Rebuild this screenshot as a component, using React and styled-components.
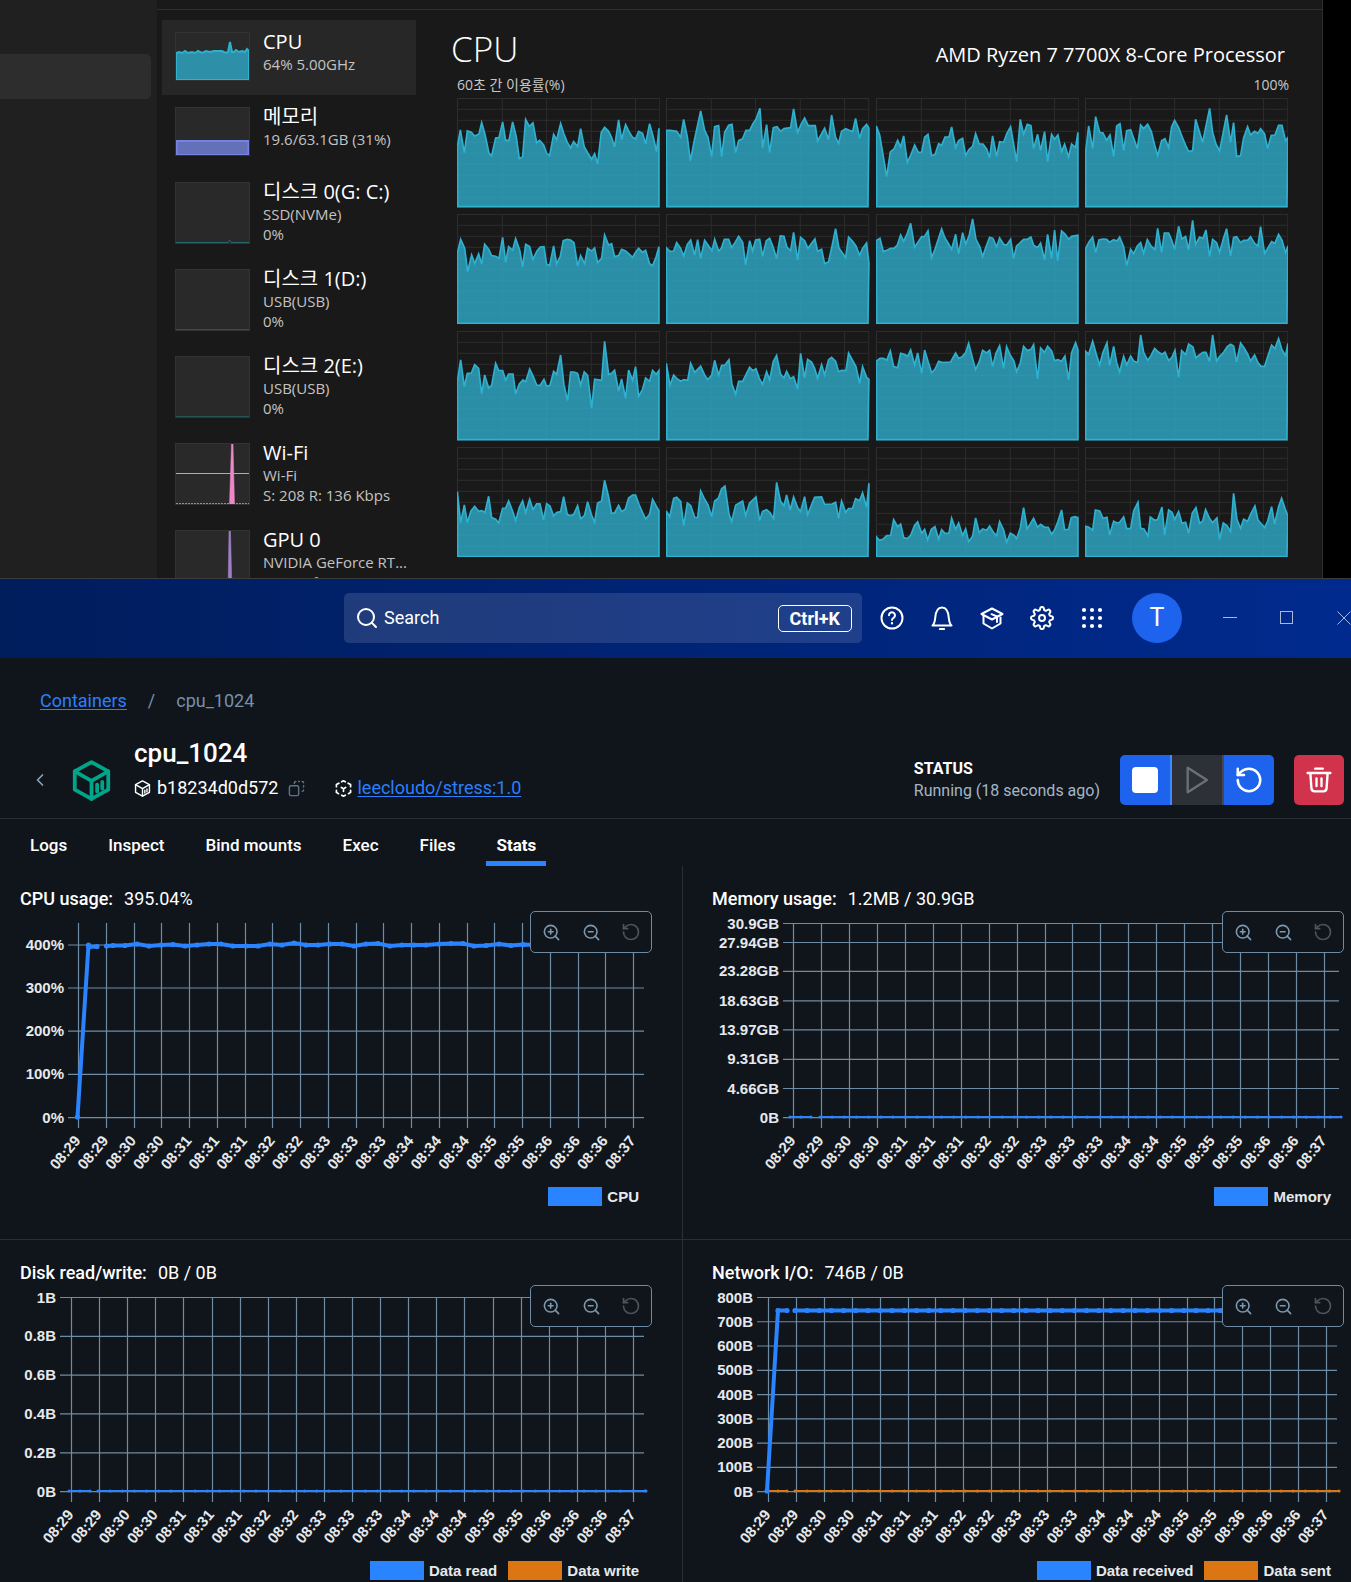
import React from "react";
import styled, { createGlobalStyle } from "styled-components";
import { Search, ZoomIn, ZoomOut, RotateCcw, Settings, ChevronLeft } from "lucide-react";

const GlobalStyle = createGlobalStyle`
  *, *::before, *::after { box-sizing: border-box; }
  body { margin: 0; background: #000; }
  button, input { font: inherit; color: inherit; }
  button { border: 0; padding: 0; background: none; cursor: pointer; }
`;

const Desktop = styled.div`
  height: 100vh;
  overflow: hidden;
  background: #000;
`;

/* ---------- Task manager ---------- */

const TaskManager = styled.section`
  display: flex;
  margin-right: 28px;
  background: #191919;
  border-right: 1px solid #2e2e2e;
  color: #fff;
  font-family: "Open Sans", "Noto Sans CJK KR", sans-serif;
`;

const NavRail = styled.nav`
  flex: 0 0 157px;
  padding-top: 54px;
  background: #202020;
`;

const NavItem = styled.button`
  display: block;
  width: 151px;
  height: 45px;
  background: #2d2d2d;
  border-radius: 0 5px 5px 0;
`;

const Performance = styled.div`
  flex: 1;
  display: flex;
  min-width: 0;
  margin-top: 9px;
  border-top: 1px solid #2f2f2f;
`;

/* The list is longer than the window, so it takes its height from the detail pane. */
const ResourceList = styled.div`
  contain: size;
  flex: 0 0 254px;
  margin-left: 5px;
  padding-top: 10px;
  overflow: hidden;
`;

const Resource = styled.button`
  display: flex;
  gap: 13px;
  width: 100%;
  height: ${(p) => (p.$tall ? 87 : 75)}px;
  padding: 10px 0 0 13px;
  text-align: left;
  background: ${(p) => (p.$selected ? "#272727" : "transparent")};
`;

const Thumb = styled.svg`
  flex: none;
  width: 75px;
  height: ${(p) => (p.$tall ? 62 : 49)}px;
  margin-top: 2px;
  background: #292929;
  border: 1px solid #333;
`;

const ResourceName = styled.div`
  font-size: 20px;
  line-height: 24px;
  white-space: nowrap;
`;

const ResourceInfo = styled.div`
  font-size: 15px;
  line-height: 20px;
  color: #c3c3c3;
  white-space: nowrap;
`;

const Detail = styled.div`
  flex: 1;
  min-width: 0;
  padding: 17px 33px 21px 35px;
`;

const DetailHead = styled.div`
  display: flex;
  justify-content: space-between;
  align-items: baseline;
  padding-right: 4px;
`;

const DetailTitle = styled.h1`
  margin: 0;
  font-size: 35px;
  font-weight: 300;
  line-height: 44px;
`;

const Processor = styled.div`
  font-size: 20px;
  line-height: 24px;
`;

const Caption = styled.div`
  display: flex;
  justify-content: space-between;
  margin: 5px 0 4px 6px;
  font-size: 14px;
  line-height: 18px;
  color: #c8c8c8;
`;

const CoreGrid = styled.div`
  display: grid;
  grid-template-columns: repeat(4, minmax(0, 1fr));
  grid-template-rows: repeat(4, minmax(0, 1fr));
  gap: 6px;
  height: 459px;
  margin: 0 1px 0 6px;
`;

const CoreSvg = styled.svg`
  display: block;
  width: 100%;
  height: 100%;
`;

// One trace per logical core: [left, top, bottom, points].
const CORES = [
  [51, 294, 621, "52,440 61,390 73,458 82,393 94,397 104,408 117,402 125,368 135,403 147,460 155,467 167,414 177,413 188,366 197,421 207,421 218,366 229,411 238,476 248,470 257,358 268,379 279,369 290,428 299,421 311,435 320,460 329,467 341,403 350,419 362,371 372,402 382,427 392,444 401,425 413,440 422,386 433,441 444,460 455,478 464,461 473,492 484,397 494,382 506,394 515,413 524,441 536,360 545,419 557,374 567,394 577,411 587,417 596,394 608,400 617,432 629,371 640,411 650,455 657,385"],
  [678, 294, 621, "679,391 690,391 710,394 722,412 731,358 742,411 751,483 763,421 782,333 794,391 804,412 815,470 824,380 836,377 845,470 854,397 866,376 876,373 887,458 896,422 908,416 918,391 929,391 939,371 948,358 960,325 968,443 980,374 989,458 1000,383 1011,380 1022,394 1032,386 1052,383 1061,327 1073,397 1083,374 1094,354 1105,377 1126,377 1133,423 1143,405 1154,385 1166,419 1175,345 1187,412 1196,430 1205,394 1217,386 1228,391 1238,395 1247,355 1259,415 1268,386 1280,373 1287,385"],
  [-12, 294, 621, "-11,378 -1,405 10,470 20,530 31,456 42,447 53,421 62,441 71,408 82,487 93,464 104,435 115,457 125,456 134,412 144,403 155,467 165,464 176,431 185,436 195,411 207,411 215,381 227,443 236,422 248,415 257,467 267,449 278,439 287,401 298,432 309,432 320,447 329,473 338,408 350,470 359,425 371,427 381,400 392,380 401,432 410,485 421,358 431,403 442,373 453,377 461,446 473,403 482,452 494,395 503,485 515,403 524,418 534,405 545,455 554,433 566,471 575,432 587,443 594,397"],
  [615, 294, 621, "617,455 626,378 638,446 647,350 659,397 669,399 680,421 690,405 701,470 710,378 720,371 731,452 740,392 752,389 772,446 782,375 791,386 803,373 814,395 824,435 833,467 845,422 855,416 866,443 875,380 884,361 896,383 908,414 917,436 926,455 938,452 947,358 968,427 989,325 998,397 1008,432 1019,453 1040,345 1052,427 1061,368 1070,470 1082,467 1091,414 1103,380 1112,405 1124,394 1134,400 1142,386 1154,402 1163,446 1174,406 1185,405 1196,376 1206,376 1217,422 1224,413"],
  [51, 642, 971, "52,760 62,718 74,745 83,815 95,765 104,791 116,762 125,792 134,733 146,748 155,767 167,769 177,775 188,712 197,787 206,740 218,751 227,716 239,750 248,801 257,733 269,740 279,778 291,753 301,741 312,740 320,793 329,797 341,738 350,792 361,769 370,722 382,718 392,720 402,728 413,798 422,767 434,791 443,745 455,753 464,744 473,788 485,775 494,705 506,735 515,731 524,770 536,767 545,748 557,753 567,762 578,772 587,757 596,745 608,757 617,751 629,791 638,797 648,773 657,740"],
  [678, 642, 971, "679,743 690,754 701,753 710,728 722,745 731,768 742,733 752,720 764,765 773,719 782,775 794,721 806,738 816,752 824,718 836,753 844,745 853,718 866,718 875,743 885,728 896,709 908,727 917,795 929,722 938,753 947,720 959,718 968,769 979,722 989,715 1000,743 1010,776 1021,708 1032,709 1041,742 1052,752 1061,697 1073,780 1082,712 1094,722 1104,745 1115,730 1125,717 1133,754 1145,748 1154,791 1166,785 1177,735 1187,686 1197,744 1217,773 1226,711 1238,724 1248,738 1259,766 1268,745 1280,729 1287,790"],
  [-12, 642, 971, "-11,722 0,715 10,755 22,750 32,745 42,745 52,735 62,705 71,724 82,700 92,670 104,742 115,725 125,710 134,709 144,692 155,773 165,748 185,687 195,714 206,732 215,748 227,703 236,762 248,698 257,733 268,705 278,657 288,718 300,741 308,770 318,741 329,712 339,715 350,741 359,714 371,733 380,736 392,718 401,775 410,738 421,728 431,718 442,718 453,711 461,736 473,743 482,729 494,780 503,703 515,775 524,690 533,782 545,693 556,703 566,718 575,709 594,706"],
  [615, 642, 971, "617,745 627,726 638,711 647,758 657,720 668,717 680,718 689,727 701,719 711,723 719,711 731,740 740,797 752,748 761,761 772,738 782,728 791,760 802,719 813,738 825,749 833,685 845,757 853,699 866,699 875,720 884,748 896,679 906,717 917,709 926,750 938,661 947,733 959,711 969,715 978,690 989,769 998,718 1010,728 1019,757 1030,717 1040,686 1052,768 1061,712 1070,710 1082,728 1091,721 1103,721 1112,710 1124,730 1134,738 1142,680 1154,760 1164,744 1175,725 1185,730 1196,703 1206,720 1217,758 1224,738"],
  [51, 33, 360, "52,185 62,120 73,200 82,160 94,159 104,134 116,145 125,222 134,165 146,204 155,196 167,130 176,151 188,152 197,181 206,162 219,162 227,222 238,192 249,180 257,186 269,147 280,170 290,195 301,196 312,178 320,199 330,196 341,154 350,163 362,105 372,195 383,242 392,156 402,156 413,160 422,196 433,156 443,166 455,265 464,178 485,181 494,64 506,163 515,160 524,151 536,213 545,177 557,235 566,150 578,181 587,140 596,229 608,208 617,174 629,184 638,151 649,163 657,152"],
  [678, 33, 360, "679,130 690,196 701,165 712,177 722,184 732,179 743,181 752,130 764,157 782,139 794,165 803,179 815,166 824,121 836,166 845,136 855,135 867,119 876,193 887,223 896,184 908,184 929,142 938,152 948,146 958,175 968,193 980,155 989,180 1000,125 1010,106 1022,163 1032,174 1040,154 1051,176 1061,170 1073,207 1082,100 1094,174 1103,118 1115,126 1124,145 1133,175 1145,134 1154,165 1166,119 1175,112 1187,124 1196,155 1206,151 1218,152 1226,99 1238,121 1248,140 1259,190 1268,140 1280,172 1287,178"],
  [-12, 33, 360, "-11,123 0,115 11,115 20,121 31,93 41,140 53,143 62,100 73,103 83,109 92,90 104,135 113,99 125,160 134,90 144,124 155,158 165,148 176,124 188,128 212,126 227,99 236,115 247,110 257,98 266,70 278,116 287,149 298,125 308,91 320,99 329,91 338,140 348,100 359,77 371,145 380,80 391,106 402,123 410,155 421,129 431,79 442,92 453,88 461,74 473,177 482,84 494,97 503,79 515,93 524,122 534,119 545,124 555,108 566,180 575,98 587,68 594,90"],
  [615, 33, 360, "617,94 626,103 638,64 648,100 659,135 669,97 681,68 689,136 701,79 710,128 719,156 731,109 740,135 752,108 761,123 773,128 782,45 791,97 803,121 813,107 824,85 835,96 846,103 855,96 866,122 876,112 885,91 896,172 905,92 917,104 926,72 939,81 948,114 959,104 969,97 978,97 989,125 998,45 1010,123 1020,108 1031,97 1042,80 1052,73 1061,78 1070,126 1082,69 1093,85 1103,102 1112,123 1124,105 1134,128 1143,139 1154,139 1164,108 1175,75 1185,86 1196,56 1206,89 1217,107 1224,70"],
  [51, 381, 711, "52,515 62,608 73,555 82,608 93,573 104,559 116,574 125,572 135,577 146,529 155,593 167,598 176,609 188,565 197,564 206,543 217,571 227,602 238,563 248,543 257,578 269,538 279,569 290,552 300,552 311,600 320,551 330,558 341,588 350,578 362,575 371,530 382,584 392,587 401,584 413,557 422,597 434,586 443,545 454,583 464,607 473,549 485,543 494,481 506,531 515,580 524,579 536,556 545,575 556,568 566,534 578,525 587,525 597,553 608,578 617,597 629,583 638,538 650,560 657,572"],
  [678, 381, 711, "679,573 689,591 701,535 710,532 722,544 731,618 742,549 752,557 764,592 773,593 782,513 794,538 804,555 815,590 824,543 835,535 845,506 855,498 867,582 875,605 887,556 898,549 908,543 917,587 929,549 948,531 959,602 968,574 980,569 990,578 1001,596 1010,487 1022,545 1032,557 1040,525 1051,570 1061,531 1073,563 1082,575 1094,530 1103,584 1124,532 1145,531 1154,553 1177,552 1187,547 1196,595 1205,543 1217,577 1226,566 1238,565 1247,536 1259,542 1268,519 1280,562 1287,490"],
  [-12, 381, 711, "-11,650 -2,661 10,657 20,647 32,646 41,599 53,620 62,612 71,653 82,656 92,646 104,616 113,606 125,640 134,628 143,660 154,628 165,620 176,658 185,629 195,640 207,640 215,595 227,628 236,609 248,647 257,627 266,665 278,649 287,594 298,638 308,627 320,631 329,618 340,637 350,647 359,605 371,630 380,667 391,640 402,646 410,656 421,624 431,563 442,627 461,595 473,622 482,613 494,622 505,622 515,643 524,630 534,605 545,570 554,629 566,628 574,593 585,590 594,593"],
  [615, 381, 711, "617,619 627,622 638,631 646,570 659,573 669,595 681,592 689,645 701,604 711,609 719,607 731,591 740,626 752,626 761,573 774,547 782,625 792,627 804,648 811,591 824,601 833,599 846,561 854,645 866,570 876,577 884,599 896,575 906,610 917,607 926,640 937,579 948,563 959,610 968,604 977,569 988,594 998,608 1011,594 1019,658 1030,609 1041,617 1052,635 1061,520 1071,598 1082,626 1091,598 1103,604 1113,581 1125,558 1134,600 1154,623 1163,604 1175,560 1184,612 1196,560 1205,535 1217,570 1224,587"],
];

function CoreChart({ core }) {
  const [left, top, bottom, points] = core;
  const base = bottom - 1;
  const right = left + 607;
  const outline = `${left + 2},${base} ${points} ${right - 1},${base}`;
  const rows = Array.from({ length: 9 }, (_, i) => top + 34 + i * 33);
  const columns = [136, 269, 403, 536].map((dx) => left + dx);
  return (
    <CoreSvg viewBox={`${left} ${top} 610 331`} preserveAspectRatio="none" aria-hidden="true">
      <g stroke="#2d2d2d" strokeWidth="3" fill="none">
        <rect x={left + 1.5} y={top + 1.5} width="607" height="328" />
        {rows.map((y) => <line key={y} x1={left} x2={left + 607} y1={y} y2={y} />)}
        {columns.map((x) => <line key={x} x1={x} x2={x} y1={top} y2={bottom} />)}
      </g>
      <polygon points={outline} fill="#2fb0cf" fillOpacity="0.78" stroke="#2fb0cf" strokeWidth="5" />
    </CoreSvg>
  );
}

const CPU_TREND = "0,20 3,19 6,20 9,18 12,20 16,19 19,20 22,18 26,20 30,18 34,19 38,18 42,18 46,18 50,20 52,19 54,9 56,19 58,19 60,17 63,19 66,18 69,19 71,16 73,18";

const RESOURCES = [
  {
    name: "CPU", info: ["64% 5.00GHz"], selected: true,
    chart: <polygon points={`0,47 ${CPU_TREND} 73,47`} fill="#2d90a8" stroke="#2fb0cf" strokeWidth="2" />,
  },
  {
    name: "메모리", info: ["19.6/63.1GB (31%)"],
    chart: <rect x="0.5" y="33" width="72" height="14" fill="#6470b8" stroke="#7482e4" strokeWidth="2" />,
  },
  {
    name: "디스크 0(G: C:)", info: ["SSD(NVMe)", "0%"], tall: true,
    chart: <path d="M0 59.5H52L53.5 57L55 59.5H73" fill="none" stroke="#27676a" />,
  },
  {
    name: "디스크 1(D:)", info: ["USB(USB)", "0%"], tall: true,
    chart: <path d="M0 59.5H73" stroke="#235555" />,
  },
  {
    name: "디스크 2(E:)", info: ["USB(USB)", "0%"], tall: true,
    chart: <path d="M0 59.5H73" stroke="#235555" />,
  },
  {
    name: "Wi-Fi", info: ["Wi-Fi", "S: 208 R: 136 Kbps"], tall: true,
    chart: (
      <>
        <path d="M0 29.5H73" stroke="#e58dc4" />
        <path d="M0 59.5H73" stroke="#b87aa0" strokeDasharray="2 1" />
        <path d="M53.5 60L55.5 0H57L58.5 60Z" fill="#ec88c6" stroke="#ec88c6" strokeOpacity="0.5" />
      </>
    ),
  },
  {
    name: "GPU 0", info: ["NVIDIA GeForce RT...", "3% (50 °C)"], tall: true,
    chart: <path d="M52 60L53 0H54.5L56 60Z" fill="#9f7fc6" stroke="#9f7fc6" strokeOpacity="0.5" />,
  },
];

/* ---------- Docker Desktop ---------- */

const Docker = styled.section`
  background: #10151b;
  color: #fff;
  font-family: Roboto, sans-serif;
  font-size: 18px;
  line-height: 24px;
`;

const TopBar = styled.header`
  display: flex;
  align-items: center;
  height: 80px;
  padding-bottom: 1px;
  overflow: hidden;
  border-top: 1px solid #3b3b3e;
  background: linear-gradient(90deg, #001d5c, #002a8e);
`;

const SearchBox = styled.label`
  display: flex;
  align-items: center;
  gap: 5px;
  flex: 0 0 518px;
  height: 50px;
  margin: 0 5px 0 auto;
  padding: 0 10px 0 11px;
  border-radius: 5px;
  background: rgba(255, 255, 255, 0.12);
`;

const SearchInput = styled.input`
  flex: 1;
  min-width: 0;
  padding: 0;
  border: 0;
  outline: 0;
  background: none;
  &::placeholder { color: #fff; opacity: 1; }
`;

const Shortcut = styled.kbd`
  padding: 0 11px;
  border: 1px solid #fff;
  border-radius: 5px;
  font-family: inherit;
  font-weight: 700;
  line-height: 25px;
`;

const BarButton = styled.button`
  display: grid;
  place-items: center;
  flex: 0 0 50px;
  height: 50px;
`;

const Avatar = styled.button`
  flex: 0 0 50px;
  height: 50px;
  margin: 0 19px 0 15px;
  border-radius: 50%;
  background: #1d63ed;
  font-size: 25px;
`;

const WindowControls = styled.div`
  display: flex;
  flex: none;
  margin-right: -21px;
  color: #a9b9dc;
`;

const WindowButton = styled.button`
  display: grid;
  place-items: center;
  width: 57px;
  height: 50px;
`;

const Breadcrumb = styled.nav`
  display: flex;
  gap: 21px;
  padding: 31px 7px 24px 40px;
  color: #7590a9;
`;

const Link = styled.a`
  color: #2a7fff;
  text-decoration: underline;
  text-underline-offset: 2px;
`;

const Summary = styled.div`
  display: flex;
  align-items: flex-end;
  padding: 0 7px 13px 28px;
  border-bottom: 1px solid #2b2f33;
`;

const BackButton = styled.button`
  display: grid;
  place-items: center;
  width: 24px;
  height: 50px;
  margin-right: 19px;
  color: #8ba3b8;
`;

const ContainerMark = styled.div`
  display: grid;
  place-items: center;
  width: 41px;
  height: 50px;
  margin-right: 22px;
  color: #00a68a;
`;

const Identity = styled.div`
  flex: 1;
  padding-bottom: 5px;
`;

const ContainerName = styled.h2`
  margin: 0 0 7px;
  font-size: 26px;
  font-weight: 500;
  line-height: 32px;
`;

const IdRow = styled.div`
  display: flex;
  align-items: center;
`;

const ContainerId = styled.span`
  margin: 0 10px 0 6px;
`;

const CopyButton = styled.button`
  display: grid;
  margin-right: 30px;
  color: #5c7388;
`;

const ImageLink = styled(Link)`
  margin-left: 5px;
`;

const Status = styled.div`
  display: flex;
  flex-direction: column;
  justify-content: center;
  height: 50px;
  margin-right: 20px;
  font-size: 16px;
  line-height: 22px;
  color: #a3b5c6;
`;

const StatusLabel = styled.strong`
  font-weight: 700;
  color: #fff;
`;

const ButtonGroup = styled.div`
  display: flex;
  margin-right: 20px;
  border-radius: 5px;
  overflow: hidden;
`;

const ActionButton = styled.button`
  display: grid;
  place-items: center;
  width: ${(p) => (p.$divider ? 52 : 50)}px;
  height: 50px;
  background: ${(p) => p.$tone};
  border-right: ${(p) => (p.$divider ? `2px solid ${p.$divider}` : "0")};
  border-radius: ${(p) => (p.$rounded ? 5 : 0)}px;
  color: ${(p) => (p.disabled ? "#6b7077" : "#fff")};
`;

const Tabs = styled.div`
  display: flex;
  gap: 21px;
  padding-left: 20px;
  font-size: 17px;
`;

const Tab = styled.button`
  padding: 14px 10px 4px;
  border-bottom: 5px solid ${(p) => (p.$active ? "#2a84ff" : "transparent")};
  font-weight: ${(p) => (p.$active ? 700 : 500)};
`;

const ChartRow = styled.div`
  display: grid;
  grid-template-columns: repeat(2, minmax(0, 1fr));
  padding: 0 7px 0 20px;
  & + & { border-top: 1px solid #2b2f33; }
`;

const Panel = styled.section`
  position: relative;
  padding: 21px 0 33px;
  &:first-child { padding-right: 30px; }
  &:last-child { padding-left: 29px; border-left: 1px solid #2b2f33; }
`;

const PanelTitle = styled.h3`
  display: flex;
  gap: 11px;
  margin: 0;
  font-size: 18px;
  font-weight: 500;
`;

const PanelValue = styled.span`
  font-weight: 400;
`;

const Plot = styled.div`
  position: relative;
`;

const PlotSvg = styled.svg`
  display: block;
  width: 100%;
  height: auto;
  font-family: "Liberation Sans", Arial, sans-serif;
  font-size: 15px;
  font-weight: 700;
`;

const ZoomTools = styled.div`
  position: absolute;
  top: 0;
  right: 0;
  display: flex;
  border: 1px solid #6d8ba5;
  border-radius: 5px;
  background: #10151b;
  color: #7d99b0;
`;

const ToolButton = styled.button`
  display: grid;
  place-items: center;
  width: 40px;
  height: 40px;
  color: ${(p) => (p.disabled ? "#4c5359" : "inherit")};
`;

const Legend = styled.div`
  display: flex;
  justify-content: flex-end;
  gap: 11px;
  margin-top: 7px;
  padding-right: 13px;
  font: 700 15px/19px "Liberation Sans", Arial, sans-serif;
  color: #e6e9ec;
`;

const LegendItem = styled.div`
  display: flex;
  gap: 5px;
`;

const Swatch = styled.span`
  width: 54px;
  height: 19px;
  background: ${(p) => p.$color};
`;

const BLUE = "#2a84ff";
const ORANGE = "#dc7612";

const TIMES_21 = "29 29 30 30 31 31 31 32 32 33 33 33 34 34 34 35 35 36 36 36 37".split(" ");
const TIMES_20 = "29 29 30 30 31 31 31 32 32 33 33 33 34 34 35 35 35 36 36 37".split(" ");

// A series that is flat at height y, with the short pause after the first samples.
const flat = (start, gapStart, gapEnd, end, y) => {
  const rest = [];
  for (let x = gapEnd; x < end; x += 12.15) rest.push([x, y]);
  rest.push([end, y]);
  return [[[start, y], [start + 11, y], [gapStart, y]], rest];
};

const CPU_SERIES = [
  [[57.5, 206], [68.5, 34], [69, 36], [77, 35.5]],
  [
    [86.5, 35], [93, 34.5], [105, 34.5], [117, 33], [129, 35], [141, 34], [153, 33.5], [165, 35], [177, 34],
    [189, 33], [201, 33], [213, 35], [226, 35], [238, 35], [250, 33], [262, 34], [274, 32], [286, 34],
    [298, 34], [310, 33], [322, 33], [334, 35], [346, 33], [358, 32.5], [370, 35], [382, 34], [394, 34],
    [406, 34], [419, 33], [431, 32.5], [443, 32.5], [454, 35], [466, 34.5], [479, 33], [491, 34.5],
    [503, 33.5], [515, 34],
  ],
];

const PANELS = [
  [
    {
      title: "CPU usage:", value: "395.04%", labelRight: 44, tick: 48, first: 58.5, last: 613.5, right: 624,
      times: TIMES_21,
      ys: [["400%", 34], ["300%", 77], ["200%", 120.2], ["100%", 163.4], ["0%", 206.6]],
      series: [{ color: BLUE, width: 4, runs: CPU_SERIES }],
      legend: [["CPU", BLUE]],
    },
    {
      title: "Memory usage:", value: "1.2MB / 30.9GB", labelRight: 67, tick: 71, first: 81.5, last: 612.5, right: 627,
      times: TIMES_20,
      ys: [["30.9GB", 12.5], ["27.94GB", 31.5], ["23.28GB", 60.3], ["18.63GB", 89.8], ["13.97GB", 118.9], ["9.31GB", 148.3], ["4.66GB", 177.5], ["0B", 206.6]],
      series: [{ color: BLUE, width: 2, runs: flat(78, 99, 108, 629, 206) }],
      legend: [["Memory", BLUE]],
    },
  ],
  [
    {
      title: "Disk read/write:", value: "0B / 0B", labelRight: 36, tick: 40, first: 51.5, last: 613.5, right: 624,
      times: TIMES_21,
      ys: [["1B", 12.5], ["0.8B", 51.3], ["0.6B", 90.1], ["0.4B", 128.9], ["0.2B", 167.8], ["0B", 206.6]],
      series: [{ color: BLUE, width: 2, runs: flat(49, 70, 78, 626, 206) }],
      legend: [["Data read", BLUE], ["Data write", ORANGE]],
    },
    {
      title: "Network I/O:", value: "746B / 0B", labelRight: 41, tick: 45, first: 56.5, last: 614.5, right: 625,
      times: TIMES_21,
      ys: ["800B", "700B", "600B", "500B", "400B", "300B", "200B", "100B", "0B"].map((t, i) => [t, 12.5 + i * 24.26]),
      series: [
        { color: ORANGE, width: 2, runs: flat(55, 75, 83, 627, 206) },
        { color: BLUE, width: 4, runs: [[[55, 206], [66, 25.5], [75, 25.5]], flat(55, 75, 83, 627, 25.5)[1]] },
      ],
      legend: [["Data received", BLUE], ["Data sent", ORANGE]],
    },
  ],
];

function LineChart({ chart }) {
  const { labelRight, tick, first, last, right, times, ys, series } = chart;
  const step = (last - first) / (times.length - 1);
  return (
    <PlotSvg viewBox="0 0 632 269" role="img" aria-label={chart.title}>
      <g stroke="#6f8ca5" strokeWidth="1.2">
        {times.map((_, i) => {
          const x = Math.round(first + i * step - 0.5) + 0.5;
          return <line key={i} x1={x} x2={x} y1="12" y2="217" />;
        })}
        {ys.map(([label, y]) => <line key={label} x1={tick} x2={right} y1={y} y2={y} />)}
      </g>
      <g fill="#e6e9ec" textAnchor="end">
        {ys.map(([label, y]) => <text key={label} x={labelRight} y={y + 5}>{label}</text>)}
        {times.map((m, i) => (
          <text key={i} dy="5" transform={`translate(${first + i * step - 1} 227) rotate(-50)`}>{`08:${m}`}</text>
        ))}
      </g>
      {series.map(({ color, width, runs }) => (
        <g key={color} fill={color}>
          {runs.map((run, i) => (
            <polyline key={i} points={run.join(" ")} fill="none" stroke={color} strokeWidth={width} />
          ))}
          {runs.flat().map(([x, y], i) => <circle key={i} cx={x} cy={y} r={width / 2 + 0.6} />)}
        </g>
      ))}
    </PlotSvg>
  );
}

function ChartPanel({ chart }) {
  return (
    <Panel>
      <PanelTitle>{chart.title}<PanelValue>{chart.value}</PanelValue></PanelTitle>
      <Plot>
        <LineChart chart={chart} />
        <ZoomTools>
          <ToolButton aria-label="Zoom in"><ZoomIn size={19} strokeWidth={2} /></ToolButton>
          <ToolButton aria-label="Zoom out"><ZoomOut size={19} strokeWidth={2} /></ToolButton>
          <ToolButton aria-label="Reset zoom" disabled><RotateCcw size={20} strokeWidth={2} /></ToolButton>
        </ZoomTools>
      </Plot>
      <Legend>
        {chart.legend.map(([name, color]) => (
          <LegendItem key={name}><Swatch $color={color} />{name}</LegendItem>
        ))}
      </Legend>
    </Panel>
  );
}

/* ---------- Icons ---------- */

const Icon = ({ size = 24, children, ...rest }) => (
  <svg width={size} height={size} viewBox="0 0 24 24" fill="none" stroke="currentColor" strokeWidth="2"
    strokeLinecap="round" strokeLinejoin="round" aria-hidden="true" {...rest}>{children}</svg>
);

const HelpIcon = () => (
  <Icon>
    <circle cx="12" cy="12" r="10.5" />
    <path d="M9 9.3a3 3 0 1 1 4.6 2.5c-1 .7-1.6 1.2-1.6 2.2" />
    <circle cx="12" cy="17.2" r="0.6" fill="currentColor" strokeWidth="1.2" />
  </Icon>
);

const BellIcon = () => (
  <Icon>
    <path d="M2.5 19.5h19c-1.8-1.5-2.3-3.5-2.7-7.5C18.4 6 16 1.5 12 1.5S5.600 6 5.200 12c-.4 4-.9 6-2.7 7.5z" />
    <path d="M10 23h4" strokeWidth="2.2" />
  </Icon>
);

const LearnIcon = () => (
  <Icon>
    <path d="M12 2.5L1.5 8 12 13.5 22.500 8z" />
    <path d="M3.5 9.5v8L12 22.500l8.500-5v-6" />
    <path d="M11.500 8.200l5.500 2.300v5.500" />
  </Icon>
);

// An eight-lobed cog: a rounded ring whose radius swings between two values.
const COG = Array.from({ length: 96 }, (_, i) => {
  const a = (i / 96) * 2 * Math.PI;
  const wave = Math.max(-1, Math.min(1, 1.6 * Math.cos(8 * a)));
  const r = 9.500 + 1.400 * wave;
  return `${(12 + r * Math.cos(a)).toFixed(2)},${(12 + r * Math.sin(a)).toFixed(2)}`;
}).join(" ");

const GearIcon = () => (
  <Icon>
    <polygon points={COG} />
    <circle cx="12" cy="12" r="3" />
  </Icon>
);

const AppsIcon = () => (
  <Icon fill="currentColor" stroke="none">
    {[4, 12, 20].flatMap((y) => [4, 12, 20].map((x) => <circle key={`${x}-${y}`} cx={x} cy={y} r="2.1" />))}
  </Icon>
);

const ContainerIcon = ({ size, stroke = 2 }) => (
  <Icon size={size} strokeWidth={stroke}>
    <path d="M12 1.200L21.800 6.600V17.400L12 22.800 2.200 17.400V6.600z" />
    <path d="M2.200 6.600L12 12.200 21.800 6.600M12 12.200V22.800" />
    <path d="M15.300 14.400v4M18.300 12.800v4" />
  </Icon>
);

const CopyIcon = () => (
  <Icon size={17}>
    <rect x="2" y="8" width="13" height="14" rx="2" />
    <path d="M9 5V4q0-2 2-2M15 2h1M20 2q2 0 2 2M22 8v2M22 14q0 2-2 2" />
  </Icon>
);

const ImageIcon = () => (
  <Icon size={17} strokeWidth="2.4">
    <path d="M9.500 2.500L12 1.200l2.500 1.300M18.500 4.500L22 6.500V9.500M22 14.500v3l-3 1.800M14.500 21.500L12 22.800l-2.500-1.300M5 19.300l-3-1.800v-3M2 9.500v-3l3.500-2" />
    <path d="M9 10.500l3 1.800 3-1.800M12 12.300V16" />
  </Icon>
);

const TrashIcon = () => (
  <Icon size={26} strokeWidth="2.2">
    <path d="M1.500 5.500h21M8.500 1.500h7M4 5.500l1 14q.2 3 3 3h8q2.800 0 3-3l1-14M9.700 10.500v7M14.300 10.500v7" />
  </Icon>
);

export default function App() {
  return (
    <Desktop>
      <GlobalStyle />
      <TaskManager>
        <NavRail><NavItem aria-label="성능" /></NavRail>
        <Performance>
          <ResourceList>
            {RESOURCES.map((r) => (
              <Resource key={r.name} $selected={r.selected} $tall={r.tall}>
                <Thumb $tall={r.tall} viewBox={r.tall ? "0 0 73 60" : "0 0 73 47"}>{r.chart}</Thumb>
                <div>
                  <ResourceName>{r.name}</ResourceName>
                  {r.info.map((line) => <ResourceInfo key={line}>{line}</ResourceInfo>)}
                </div>
              </Resource>
            ))}
          </ResourceList>
          <Detail>
            <DetailHead>
              <DetailTitle>CPU</DetailTitle>
              <Processor>AMD Ryzen 7 7700X 8-Core Processor</Processor>
            </DetailHead>
            <Caption><span>60초 간 이용률(%)</span><span>100%</span></Caption>
            <CoreGrid>
              {CORES.map((core, i) => <CoreChart key={i} core={core} />)}
            </CoreGrid>
          </Detail>
        </Performance>
      </TaskManager>

      <Docker>
        <TopBar>
          <SearchBox>
            <Search size={24} strokeWidth={2} />
            <SearchInput type="text" placeholder="Search" aria-label="Search" />
            <Shortcut>Ctrl+K</Shortcut>
          </SearchBox>
          <BarButton aria-label="Help"><HelpIcon /></BarButton>
          <BarButton aria-label="Notifications"><BellIcon /></BarButton>
          <BarButton aria-label="Learning center"><LearnIcon /></BarButton>
          <BarButton aria-label="Settings"><GearIcon /></BarButton>
          <BarButton aria-label="Apps"><AppsIcon /></BarButton>
          <Avatar>T</Avatar>
          <WindowControls>
            <WindowButton aria-label="Minimize">
              <svg width="14" height="14"><path d="M0 6.500H14" stroke="currentColor" /></svg>
            </WindowButton>
            <WindowButton aria-label="Maximize">
              <svg width="14" height="14"><rect x="0.500" y="0.500" width="12" height="12" fill="none" stroke="currentColor" /></svg>
            </WindowButton>
            <WindowButton aria-label="Close">
              <svg width="14" height="14"><path d="M0.500 0.500L13.500 13.500M13.500 0.500L0.500 13.500" stroke="currentColor" /></svg>
            </WindowButton>
          </WindowControls>
        </TopBar>

        <Breadcrumb>
          <Link href="#containers">Containers</Link>
          <span>/</span>
          <span>cpu_1024</span>
        </Breadcrumb>

        <Summary>
          <BackButton aria-label="Back"><ChevronLeft size={20} strokeWidth={2} /></BackButton>
          <ContainerMark><ContainerIcon size={41} stroke={2.2} /></ContainerMark>
          <Identity>
            <ContainerName>cpu_1024</ContainerName>
            <IdRow>
              <ContainerIcon size={17} />
              <ContainerId>b18234d0d572</ContainerId>
              <CopyButton aria-label="Copy"><CopyIcon /></CopyButton>
              <ImageIcon />
              <ImageLink href="#image">leecloudo/stress:1.0</ImageLink>
            </IdRow>
          </Identity>
          <Status>
            <StatusLabel>STATUS</StatusLabel>
            <span>Running (18 seconds ago)</span>
          </Status>
          <ButtonGroup>
            <ActionButton aria-label="Stop" $tone="#1d63ed" $divider="#3d8bff">
              <svg width="26" height="26"><rect width="26" height="26" rx="4" fill="currentColor" /></svg>
            </ActionButton>
            <ActionButton aria-label="Start" disabled $tone="#2d3037" $divider="#45484e">
              <Icon size={28}><path d="M4 1.500V22.500L20.500 12z" /></Icon>
            </ActionButton>
            <ActionButton aria-label="Restart" $tone="#1d63ed"><RotateCcw size={30} strokeWidth={2} /></ActionButton>
          </ButtonGroup>
          <ActionButton aria-label="Delete" $tone="#d2334c" $rounded><TrashIcon /></ActionButton>
        </Summary>

        <Tabs role="tablist">
          {["Logs", "Inspect", "Bind mounts", "Exec", "Files", "Stats"].map((t) => (
            <Tab key={t} role="tab" aria-selected={t === "Stats"} $active={t === "Stats"}>{t}</Tab>
          ))}
        </Tabs>

        {PANELS.map((row, i) => (
          <ChartRow key={i}>
            {row.map((chart) => <ChartPanel key={chart.title} chart={chart} />)}
          </ChartRow>
        ))}
      </Docker>
    </Desktop>
  );
}
